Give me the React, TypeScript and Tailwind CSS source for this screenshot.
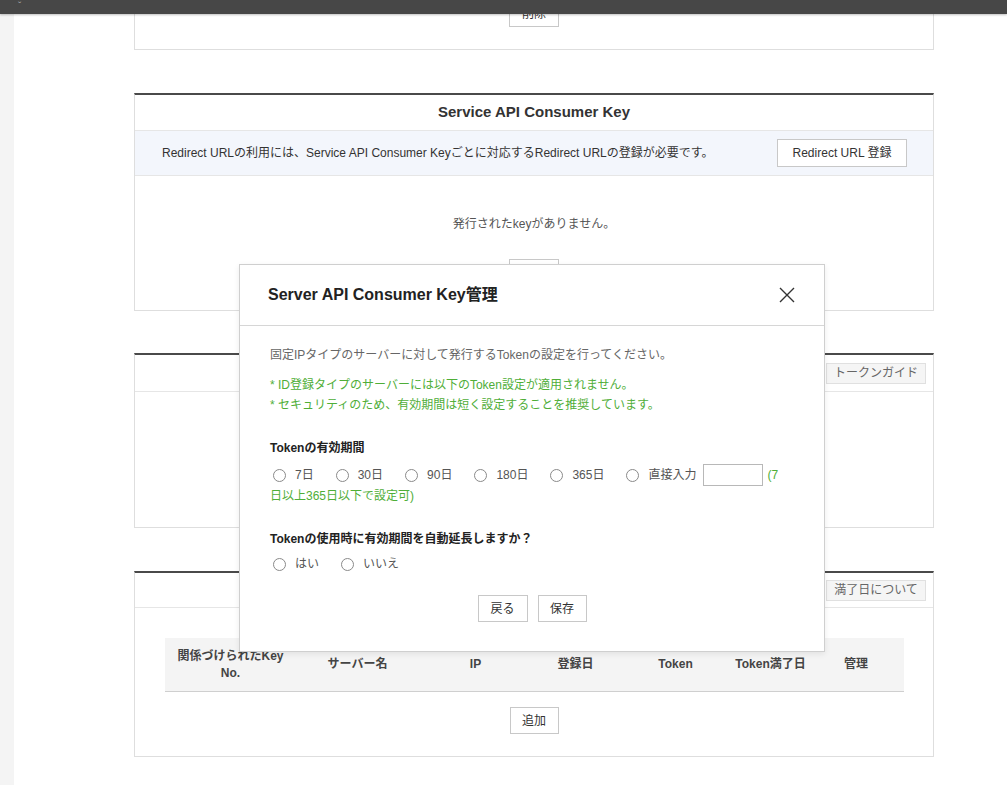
import React from "react";

const FONT = {
  fontFamily: '"Liberation Sans", "Noto Sans CJK JP", sans-serif',
};

const COLS = [
  { label: "関係づけられたKey No.", w: "w-[132px]" },
  { label: "サーバー名", w: "w-[122px]" },
  { label: "IP", w: "w-[114px]" },
  { label: "登録日", w: "w-[86px]" },
  { label: "Token", w: "w-[114px]" },
  { label: "Token満了日", w: "w-[76px]" },
  { label: "管理", w: "w-[95px]" },
];

const PERIODS = ["7日", "30日", "90日", "180日", "365日"];

function Btn({ children, className = "" }: { children: React.ReactNode; className?: string }) {
  return (
    <button
      className={`h-[27px] whitespace-nowrap border border-[#c8c8c8] bg-white text-[12px] text-[#333] ${className}`}
    >
      {children}
    </button>
  );
}

function GuideBtn({ children }: { children: React.ReactNode }) {
  return (
    <button className="h-[21px] w-[100px] whitespace-nowrap border border-[#e0e0e0] bg-[#f5f5f5] text-[12px] text-[#666]">
      {children}
    </button>
  );
}

function Radio({ label, className = "" }: { label: string; className?: string }) {
  return (
    <label className={`flex items-center gap-[9px] whitespace-nowrap ${className}`}>
      <span className="inline-block h-[13px] w-[13px] rounded-full border border-[#8a8a8a] bg-white" />
      <span>{label}</span>
    </label>
  );
}

function Panel({ children, className = "" }: { children: React.ReactNode; className?: string }) {
  return (
    <section
      className={`w-[800px] border-x border-b border-x-[#dedede] border-b-[#dedede] bg-white ${className}`}
    >
      {children}
    </section>
  );
}

function ManageModal() {
  return (
    <div className="absolute left-[239px] top-[264px] w-[586px] border border-[#cfcfcf] bg-white shadow-[0_2px_6px_rgba(0,0,0,0.08)]">
      <div className="flex h-[61px] items-center justify-between border-b border-[#d6d6d6] pl-[28px] pr-[28px]">
        <h2 className="text-[16px] font-bold text-[#222]">Server API Consumer Key管理</h2>
        <svg width="16" height="16" viewBox="0 0 16 16" className="mr-[1px]">
          <path d="M1 1 L15 15 M15 1 L1 15" stroke="#333" strokeWidth="1.4" fill="none" />
        </svg>
      </div>
      <div className="px-[30px] pb-[29px] pt-[19px] text-[12px] leading-[20px]">
        <p className="text-[#666]">
          固定IPタイプのサーバーに対して発行するTokenの設定を行ってください。
        </p>
        <div className="mt-[10px] text-[#4fae38]">
          <p>* ID登録タイプのサーバーには以下のToken設定が適用されません。</p>
          <p>* セキュリティのため、有効期間は短く設定することを推奨しています。</p>
        </div>
        <p className="mt-[23px] font-bold text-[#222]">Tokenの有効期間</p>
        <div className="mt-[6px] flex flex-wrap items-center text-[#555]">
          {PERIODS.map((p) => (
            <Radio key={p} label={p} className="mr-[22px] first:ml-[3px]" />
          ))}
          <Radio label="直接入力" className="mr-[7px]" />
          <input className="h-[22px] w-[60px] border border-[#b8b8b8] bg-white" />
          <span className="ml-[4px] text-[#4fae38]">(7</span>
        </div>
        <p className="text-[#4fae38]">日以上365日以下で設定可)</p>
        <p className="mt-[23px] font-bold text-[#222]">Tokenの使用時に有効期間を自動延長しますか？</p>
        <div className="mt-[5px] flex items-center text-[#555]">
          <Radio label="はい" className="ml-[3px] mr-[22px]" />
          <Radio label="いいえ" />
        </div>
        <div className="mt-[21px] flex justify-center gap-[10px]">
          <Btn className="w-[50px]">戻る</Btn>
          <Btn className="w-[49px]">保存</Btn>
        </div>
      </div>
    </div>
  );
}

export default function App() {
  return (
    <div className="relative h-[785px] w-[1007px] overflow-hidden bg-white" style={FONT}>
      <div className="absolute left-0 top-0 z-20 flex h-[14px] w-full items-center bg-[#474747] pl-[18px] shadow-[0_1px_2px_rgba(0,0,0,0.25)]">
        <span className="text-[10px] leading-none text-[#aaa]">ˇ</span>
      </div>

      <div className="flex h-full">
        <div className="h-full w-[14px] bg-[#f4f4f4]" />
        <main className="ml-[120px] flex flex-col">
          <Panel className="-mt-[20px] flex h-[70px] justify-center border-t border-t-[#dedede] pt-[19px]">
            <Btn className="w-[50px]">削除</Btn>
          </Panel>

          <Panel className="mt-[43px] border-t-2 border-t-[#4a4a4a]">
            <h2 className="flex h-[36px] items-center justify-center border-b border-[#e6e6e6] text-[15px] font-bold text-[#333]">
              Service API Consumer Key
            </h2>
            <div className="flex h-[45px] items-center justify-between border-b border-[#e6e6e6] bg-[#f3f6fc] pl-[27px] pr-[26px] text-[12px] text-[#333]">
              <p>Redirect URLの利用には、Service API Consumer Keyごとに対応するRedirect URLの登録が必要です。</p>
              <Btn className="h-[28px] w-[130px]">Redirect URL 登録</Btn>
            </div>
            <div className="flex h-[134px] flex-col items-center pt-[39px] text-[12px] text-[#555]">
              <p>発行されたkeyがありません。</p>
              <Btn className="mt-[26px] w-[50px]">発行</Btn>
            </div>
          </Panel>

          <Panel className="mt-[42px] border-t-2 border-t-[#4a4a4a]">
            <div className="flex h-[37px] items-center justify-end border-b border-[#e6e6e6] pr-[7px]">
              <GuideBtn>トークンガイド</GuideBtn>
            </div>
            <div className="h-[135px]" />
          </Panel>

          <Panel className="mt-[43px] border-t-2 border-t-[#4a4a4a]">
            <div className="flex h-[35px] items-center justify-end border-b border-[#e6e6e6] pr-[7px]">
              <GuideBtn>満了日について</GuideBtn>
            </div>
            <div className="flex flex-col items-center pb-[22px] pt-[30px]">
              <div className="flex h-[54px] w-[739px] items-center border-b border-[#cfcfcf] bg-[#f4f4f4] text-[12px] font-bold leading-[17px] text-[#444]">
                {COLS.map((c) => (
                  <div key={c.label} className={`${c.w} px-[2px] text-center`}>
                    {c.label === "Token満了日" ? (
                      <span className="whitespace-nowrap">{c.label}</span>
                    ) : (
                      c.label
                    )}
                  </div>
                ))}
              </div>
              <Btn className="mt-[15px] w-[49px]">追加</Btn>
            </div>
          </Panel>
        </main>
      </div>

      <ManageModal />
    </div>
  );
}
